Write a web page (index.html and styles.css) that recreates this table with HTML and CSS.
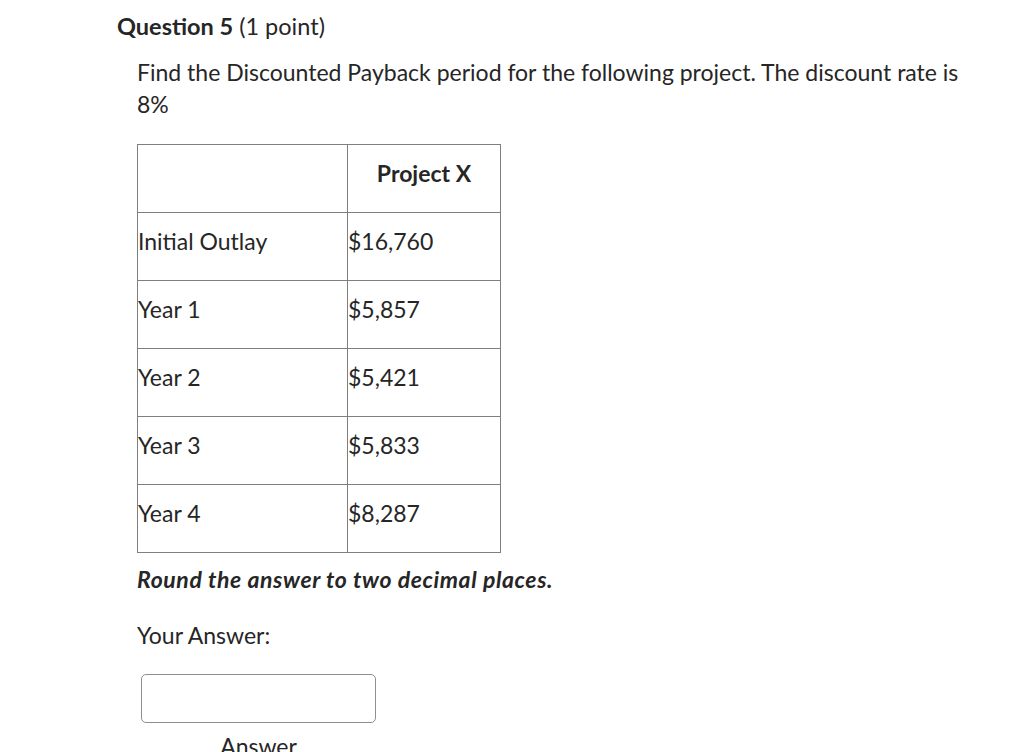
FILE: index.html
```html
<!DOCTYPE html>
<html>
<head>
<meta charset="utf-8">
<link rel="stylesheet" href="styles.css">
</head>
<body>
<div class="page">
  <h2 class="qtitle"><span class="qnum">Question 5</span> (1 point)</h2>
  <div class="qbody">
    <p class="prompt">Find the Discounted Payback period for the following project. The discount rate is 8%</p>
    <table class="cf">
      <tr><td></td><th>Project X</th></tr>
      <tr><td>Initial Outlay</td><td>$16,760</td></tr>
      <tr><td>Year 1</td><td>$5,857</td></tr>
      <tr><td>Year 2</td><td>$5,421</td></tr>
      <tr><td>Year 3</td><td>$5,833</td></tr>
      <tr><td>Year 4</td><td>$8,287</td></tr>
    </table>
    <p class="note">Round the answer to two decimal places.</p>
    <p class="your">Your Answer:</p>
    <div class="answer">
      <div class="input"></div>
      <div class="label">Answer</div>
    </div>
  </div>
</div>
</body>
</html>
```

FILE: styles.css
```css
html, body {
  margin: 0;
  padding: 0;
  background: #fff;
}
body {
  font-family: Lato, "Open Sans", sans-serif;
  color: #262626;
}
.page {
  padding: 11px 0 0 117px;
  width: 860px;
}
.qtitle {
  margin: 0;
  font-size: 23.5px;
  font-weight: 400;
  line-height: 30px;
}
.qnum {
  font-weight: 700;
}
.qbody {
  padding-left: 20px;
}
.prompt {
  margin: 15px 0 0;
  font-size: 23px;
  line-height: 32px;
}
.cf {
  margin-top: 24px;
  border-collapse: collapse;
  font-size: 23px;
}
.cf td, .cf th {
  border: 1px solid #7f7f7f;
  height: 55px;
  padding: 0 0 12px;
  text-align: left;
  vertical-align: middle;
}
.cf td:first-child {
  width: 209px;
}
.cf th, .cf td:last-child {
  width: 152px;
}
.cf th {
  text-align: center;
  font-weight: 700;
}
.note {
  margin: 11px 0 0;
  font-size: 23px;
  font-weight: 700;
  font-style: italic;
  line-height: 30px;
  letter-spacing: 0.6px;
}
.your {
  margin: 26px 0 0;
  font-size: 23px;
  line-height: 30px;
}
.answer {
  margin-top: 24px;
  padding-left: 4px;
  width: 235px;
}
.input {
  height: 47px;
  border: 1px solid #8f8f8f;
  border-radius: 5px;
}
.label {
  margin-top: 11px;
  text-align: center;
  font-size: 23px;
  line-height: 24px;
}
```
